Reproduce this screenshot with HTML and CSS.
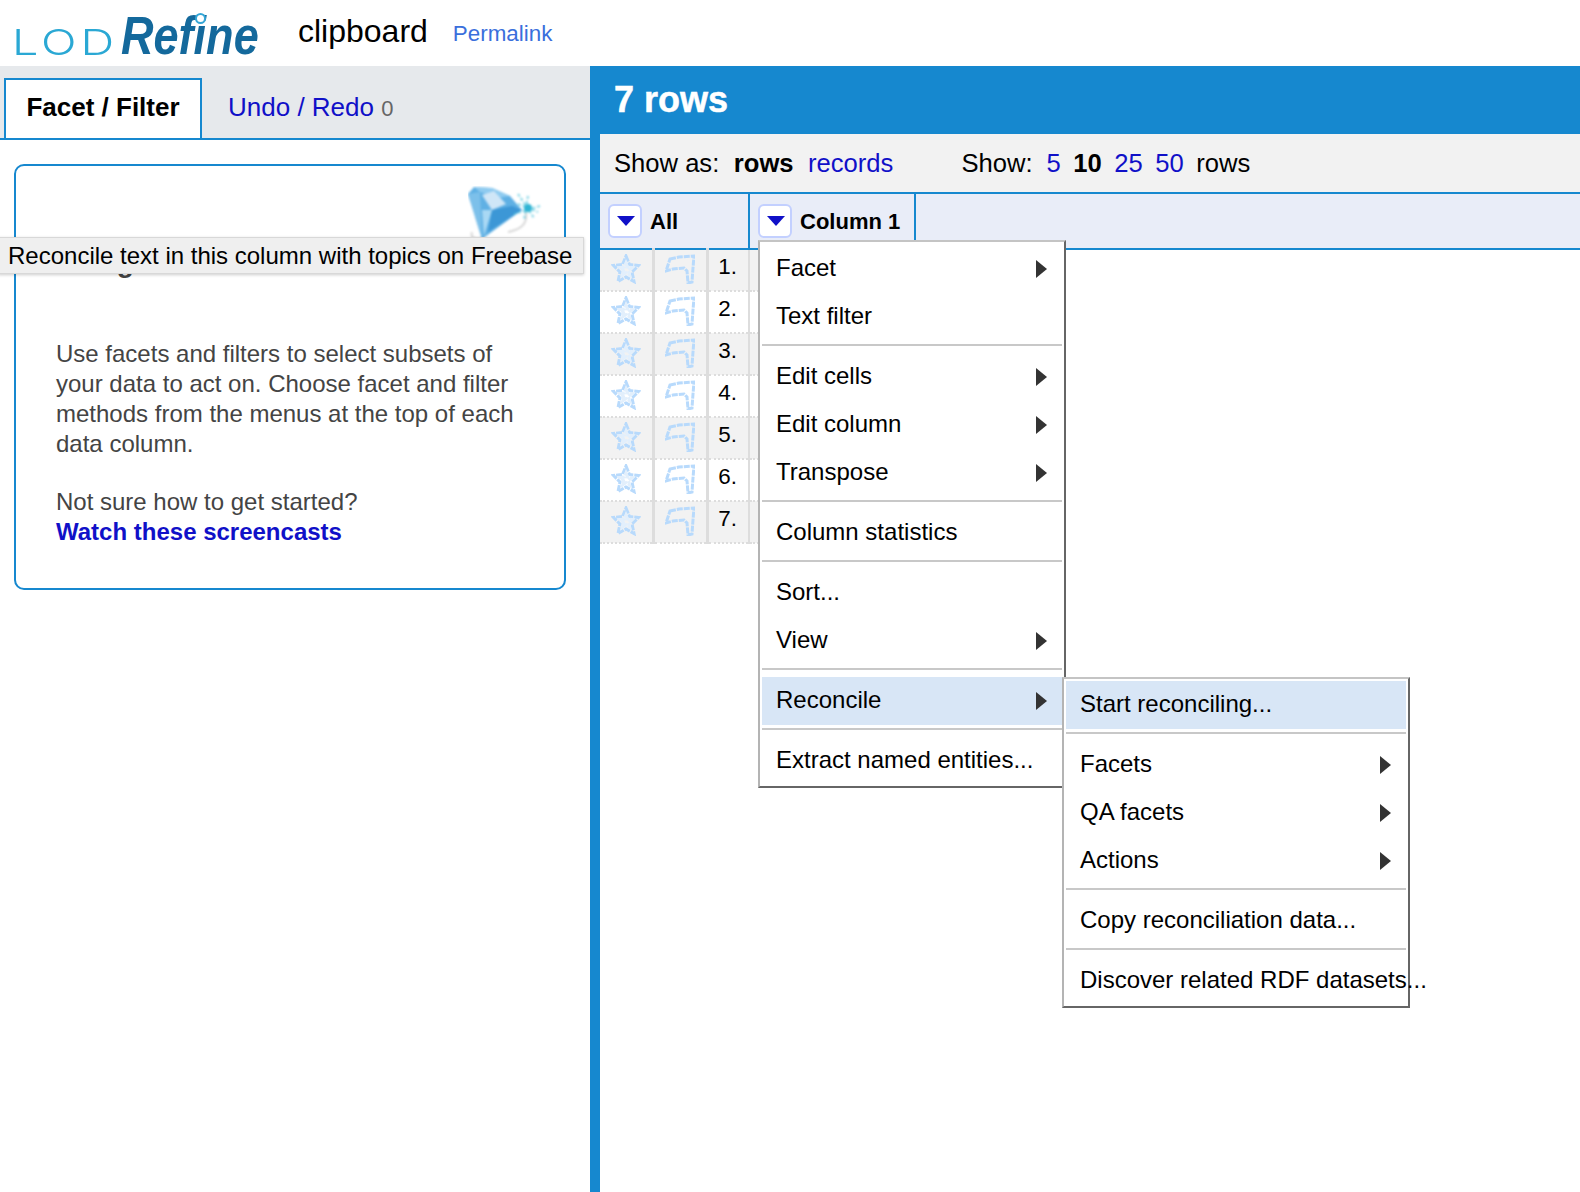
FILE: index.html
```html
<!DOCTYPE html>
<html lang="en">
<head>
  <meta charset="UTF-8" />
  <title>clipboard - LOD Refine</title>
  <link rel="stylesheet" href="styles.css">
</head>
<body>
  <svg class="icon-defs" width="0" height="0">
    <symbol id="star" viewBox="0 0 28 30">
      <path d="M14 2 L17.500 10.500 L26.500 11.500 L20 18 L22 27.500 L14 23 L6 27.500 L8 18 L1.500 11.500 L10.500 10.500 Z" />
      <path d="M14 9 L15.500 13 L20 13.500 L16.500 16.500 L17.500 21 L14 18.500 L10.500 21 L11.500 16.500 L8 13.500 L12.500 13 Z" class="star-inner" />
    </symbol>
    <symbol id="flag" viewBox="0 0 30 30">
      <path d="M5 5 L14 3 L29 2 L28 14 L27 28 L23 29 L22 17 L19 14 L8 15 L1 17 Z" />
    </symbol>
  </svg>

  <header class="app-header">
    <div class="logo">
      <span class="logo-lod">LOD</span>
      <span class="logo-refine">Refine</span>
    </div>
    <span class="project-name">clipboard</span>
    <a class="permalink" href="#">Permalink</a>
  </header>

  <div class="workspace">
    <aside class="left-panel">
      <nav class="tabs">
        <a class="tab tab-active" href="#">Facet / Filter</a>
        <a class="tab" href="#"><span class="tab-link">Undo / Redo</span> <span class="tab-count">0</span></a>
      </nav>
      <div class="left-body">
        <section class="help-box">
          <svg class="gem" width="76" height="54" viewBox="0 0 76 54">
            <g class="gem-blur">
              <path d="M4 46 C2 52 8 54 14 52 M40 46 C50 44 60 40 58 26" fill="none" stroke="#d8d8d8" stroke-width="2" />
              <path d="M0 8 L6 1 L24 2 L42 10 L54 24 L14 53 Z" fill="#5fb0e4" />
              <path d="M6 1 L24 2 L42 10 L30 12 L12 6 Z" fill="#8fcbf0" />
              <path d="M14 9 L26 5 L38 18 L24 24 Z" fill="#cfe6f7" />
              <path d="M0 8 L12 6 L14 53 Z" fill="#7cc0ea" />
              <path d="M24 24 L44 20 L54 24 L20 46 Z" fill="#3c97d6" />
              <path d="M14 24 L24 24 L16 50 Z" fill="#a9d8f4" />
              <path d="M50 8 L66 32 M72 20 L46 28 M60 10 L56 34 M50 18 L70 26" class="gem-spark" />
              <circle cx="60" cy="22" r="4" fill="#2fb4d4" />
            </g>
          </svg>
          <h2 class="help-title">Using facets and filters</h2>
          <p class="help-text">Use facets and filters to select subsets of your data to act on. Choose facet and filter methods from the menus at the top of each data column.</p>
          <p class="help-text">Not sure how to get started?<br><a class="help-link" href="#">Watch these screencasts</a></p>
        </section>
      </div>
    </aside>

    <main class="right-panel">
      <div class="summary-bar">7 rows</div>
      <div class="view-bar">
        <div class="view-group">
          <span>Show as:</span>
          <b>rows</b>
          <a href="#">records</a>
        </div>
        <div class="view-group view-group-size">
          <span class="view-label">Show:</span>
          <a href="#">5</a>
          <b>10</b>
          <a href="#">25</a>
          <a href="#">50</a>
          <span>rows</span>
        </div>
      </div>

      <table class="data-table">
        <colgroup>
          <col class="c-star">
          <col class="c-flag">
          <col class="c-num">
          <col class="c-one">
          <col>
        </colgroup>
        <thead>
          <tr>
            <th class="col-border" colspan="3"><div class="col-head"><span class="col-btn"></span>All</div></th>
            <th class="col-border"><div class="col-head"><span class="col-btn"></span>Column 1</div></th>
            <th></th>
          </tr>
        </thead>
        <tbody>
          <tr class="row-odd"><td class="cell-icon"><svg class="row-icon"><use href="#star" /></svg></td><td class="cell-icon"><svg class="row-icon"><use href="#flag" /></svg></td><td class="cell-num">1.</td><td></td><td class="cell-empty"></td></tr>
          <tr><td class="cell-icon"><svg class="row-icon"><use href="#star" /></svg></td><td class="cell-icon"><svg class="row-icon"><use href="#flag" /></svg></td><td class="cell-num">2.</td><td></td><td class="cell-empty"></td></tr>
          <tr class="row-odd"><td class="cell-icon"><svg class="row-icon"><use href="#star" /></svg></td><td class="cell-icon"><svg class="row-icon"><use href="#flag" /></svg></td><td class="cell-num">3.</td><td></td><td class="cell-empty"></td></tr>
          <tr><td class="cell-icon"><svg class="row-icon"><use href="#star" /></svg></td><td class="cell-icon"><svg class="row-icon"><use href="#flag" /></svg></td><td class="cell-num">4.</td><td></td><td class="cell-empty"></td></tr>
          <tr class="row-odd"><td class="cell-icon"><svg class="row-icon"><use href="#star" /></svg></td><td class="cell-icon"><svg class="row-icon"><use href="#flag" /></svg></td><td class="cell-num">5.</td><td></td><td class="cell-empty"></td></tr>
          <tr><td class="cell-icon"><svg class="row-icon"><use href="#star" /></svg></td><td class="cell-icon"><svg class="row-icon"><use href="#flag" /></svg></td><td class="cell-num">6.</td><td></td><td class="cell-empty"></td></tr>
          <tr class="row-odd"><td class="cell-icon"><svg class="row-icon"><use href="#star" /></svg></td><td class="cell-icon"><svg class="row-icon"><use href="#flag" /></svg></td><td class="cell-num">7.</td><td></td><td class="cell-empty"></td></tr>
        </tbody>
      </table>
    </main>
  </div>

  <!-- column menu and its submenu sit over the table -->
  <div class="menu menu-column">
    <div class="menu-item has-sub">Facet</div>
    <div class="menu-item">Text filter</div>
    <div class="menu-sep"></div>
    <div class="menu-item has-sub">Edit cells</div>
    <div class="menu-item has-sub">Edit column</div>
    <div class="menu-item has-sub">Transpose</div>
    <div class="menu-sep"></div>
    <div class="menu-item">Column statistics</div>
    <div class="menu-sep"></div>
    <div class="menu-item">Sort...</div>
    <div class="menu-item has-sub">View</div>
    <div class="menu-sep"></div>
    <div class="menu-item has-sub menu-item-active">Reconcile</div>
    <div class="menu-sep"></div>
    <div class="menu-item">Extract named entities...</div>
  </div>

  <div class="menu menu-reconcile">
    <div class="menu-item menu-item-active">Start reconciling...</div>
    <div class="menu-sep"></div>
    <div class="menu-item has-sub">Facets</div>
    <div class="menu-item has-sub">QA facets</div>
    <div class="menu-item has-sub">Actions</div>
    <div class="menu-sep"></div>
    <div class="menu-item">Copy reconciliation data...</div>
    <div class="menu-sep"></div>
    <div class="menu-item">Discover related RDF datasets...</div>
  </div>

  <div class="tooltip">Reconcile text in this column with topics on Freebase</div>
</body>
</html>
```

FILE: styles.css
```css
html, body {
  height: 100%;
}

body {
  margin: 0;
  font-family: "Liberation Sans", Arial, sans-serif;
  color: #000;
  background: white;
  overflow: hidden;
  display: flex;
  flex-direction: column;
}

a {
  color: #1010c8;
  text-decoration: none;
}

.icon-defs {
  position: absolute;
}

/* header */
.app-header {
  height: 66px;
  flex: none;
  display: flex;
  align-items: center;
  padding-left: 14px;
}

.logo {
  position: relative;
  width: 284px;
  height: 66px;
}

.logo-lod {
  position: absolute;
  left: -2px;
  top: 20px;
  font-family: Inter, sans-serif;
  font-weight: 300;
  font-size: 36px;
  line-height: 44px;
  letter-spacing: 3px;
  color: #2aa8d4;
  transform: scaleX(1.3);
  transform-origin: left top;
}

.logo-refine {
  position: absolute;
  left: 107px;
  top: 6px;
  font-style: italic;
  font-weight: bold;
  font-size: 53px;
  line-height: 60px;
  color: #14699c;
  transform: scaleX(0.85);
  transform-origin: left top;
}

/* ring over the dot of the i */
.logo::after {
  content: "";
  position: absolute;
  left: 181px;
  top: 13px;
  width: 7px;
  height: 7px;
  border: 2px solid #35a6d6;
  border-radius: 50%;
  background: white;
}

.project-name {
  font-size: 32px;
  margin-top: -4px;
}

.permalink {
  font-size: 22.400px;
  color: #3a6fdc;
  margin-left: 25px;
  margin-top: 2px;
}

/* panels */
.workspace {
  flex: 1;
  display: flex;
  min-height: 0;
}

.left-panel {
  width: 590px;
  flex: none;
}

.tabs {
  height: 72px;
  box-sizing: content-box;
  background: #e6e9ec;
  border-bottom: 2px solid #1688cf;
  display: flex;
  align-items: flex-end;
  padding-left: 4px;
}

.tab {
  height: 60px;
  line-height: 58px;
  font-size: 26px;
  padding: 0 26px;
  box-sizing: border-box;
}

.tab-active {
  width: 198px;
  padding: 0;
  text-align: center;
  line-height: 54px;
  color: #000;
  font-weight: bold;
  background: white;
  border: 2px solid #1688cf;
  border-bottom: none;
}

.tab-count {
  font-size: 22px;
  color: #666;
}

.left-body {
  padding: 24px 24px 0 14px;
}

.help-box {
  position: relative;
  height: 426px;
  box-sizing: border-box;
  border: 2px solid #1688cf;
  border-radius: 10px;
  padding: 81px 40px 0 40px;
}

.gem {
  position: absolute;
  left: 452px;
  top: 20px;
}

.gem-blur {
  filter: blur(0.800px);
}

.gem-spark {
  fill: none;
  stroke: #4fc3dc;
  stroke-width: 2;
  stroke-dasharray: 3 2;
  opacity: 0.7;
}

.help-title {
  margin: 0 0 60px;
  font-size: 28px;
  line-height: 32px;
  color: #444;
}

.help-text {
  margin: 0 0 28px;
  font-size: 24px;
  line-height: 30px;
  color: #444;
}

.help-link {
  font-weight: bold;
}

.right-panel {
  flex: 1;
  border-left: 10px solid #1688cf;
  min-width: 0;
}

.summary-bar {
  height: 68px;
  margin-left: -10px;
  padding-left: 24px;
  background: #1688cf;
  color: white;
  font-size: 36px;
  font-weight: bold;
  line-height: 68px;
  -webkit-text-stroke: 0.500px white;
}

.view-bar {
  height: 58px;
  background: #f2f2f2;
  border-bottom: 2px solid #1688cf;
  display: flex;
  align-items: center;
  gap: 68px;
  padding-left: 14px;
  font-size: 25.600px;
}

.view-group {
  display: flex;
  gap: 14.500px;
}

.view-group-size {
  gap: 12.500px;
}

.view-label {
  margin-right: 1.500px;
}

/* data table */
.data-table {
  width: 980px;
  table-layout: fixed;
  border-collapse: collapse;
  border-spacing: 0;
}

.c-star {
  width: 53px;
}

.c-flag {
  width: 54px;
}

.c-num {
  width: 42px;
}

.c-one {
  width: 166px;
}

.data-table th {
  height: 54px;
  padding: 0;
  background: #e9edf8;
  border-bottom: 2px solid #1688cf;
  text-align: left;
  font-size: 22px;
}

.col-border {
  border-right: 2px solid #1688cf;
}

.col-head {
  display: flex;
  align-items: center;
  gap: 8px;
  padding-left: 8px;
  padding-top: 2px;
}

.col-btn {
  position: relative;
  width: 34px;
  height: 34px;
  margin-top: -2px;
  box-sizing: border-box;
  border: 2px solid #c3d0ff;
  border-radius: 6px;
  background: white;
}

.col-btn::after {
  content: "";
  position: absolute;
  left: 7px;
  top: 10px;
  border-left: 9px solid transparent;
  border-right: 9px solid transparent;
  border-top: 10px solid #1010c8;
}

.data-table td {
  height: 40px;
  padding: 0;
  border-bottom: 2px dotted #ddd;
}

.row-odd td {
  background: #f2f2f2;
}

.data-table td.cell-empty {
  background: white;
  border-bottom: none;
}

.cell-icon {
  border-right: 3px solid #ddd;
  vertical-align: top;
}

.cell-num {
  border-right: 2px solid #ddd;
  font-size: 22.400px;
  text-align: right;
  padding-right: 11px !important;
  vertical-align: top;
  line-height: 34px;
}

.row-icon {
  display: block;
  width: 30px;
  height: 30px;
  margin: 4px auto 0;
  fill: none;
  stroke: #b8dafc;
  stroke-width: 3;
  stroke-dasharray: 6 1;
  filter: blur(0.400px);
}

.star-inner {
  stroke: #e2effc;
}

/* menus */
.menu {
  position: absolute;
  box-sizing: border-box;
  padding: 2px 2px;
  background: white;
  border: 2px solid #666;
  border-top-color: #c4c4c4;
  border-left-color: #b4b4b4;
  font-size: 24px;
  white-space: nowrap;
}

.menu-column {
  left: 758px;
  top: 240px;
  width: 308px;
  height: 548px;
  padding-top: 3px;
}

.menu-reconcile {
  left: 1062px;
  top: 677px;
  width: 348px;
  height: 331px;
}

.menu-item {
  position: relative;
  height: 48px;
  line-height: 46px;
  padding-left: 14px;
}

.menu-item-active {
  background: #d8e6f6;
}

.has-sub::after {
  content: "";
  position: absolute;
  right: 15px;
  top: 15px;
  border-left: 11px solid #333;
  border-top: 9px solid transparent;
  border-bottom: 9px solid transparent;
}

.menu-sep {
  height: 2px;
  margin: 3px 0 7px;
  background: #c8c8c8;
}

/* browser tooltip */
.tooltip {
  position: absolute;
  left: -2px;
  top: 237px;
  width: 586px;
  height: 37px;
  box-sizing: border-box;
  padding-left: 9px;
  background: #efefef;
  border: 1px solid #d8d8d8;
  box-shadow: 0 1px 3px rgba(0, 0, 0, 0.2);
  font-size: 24px;
  line-height: 36px;
  white-space: nowrap;
}
```
